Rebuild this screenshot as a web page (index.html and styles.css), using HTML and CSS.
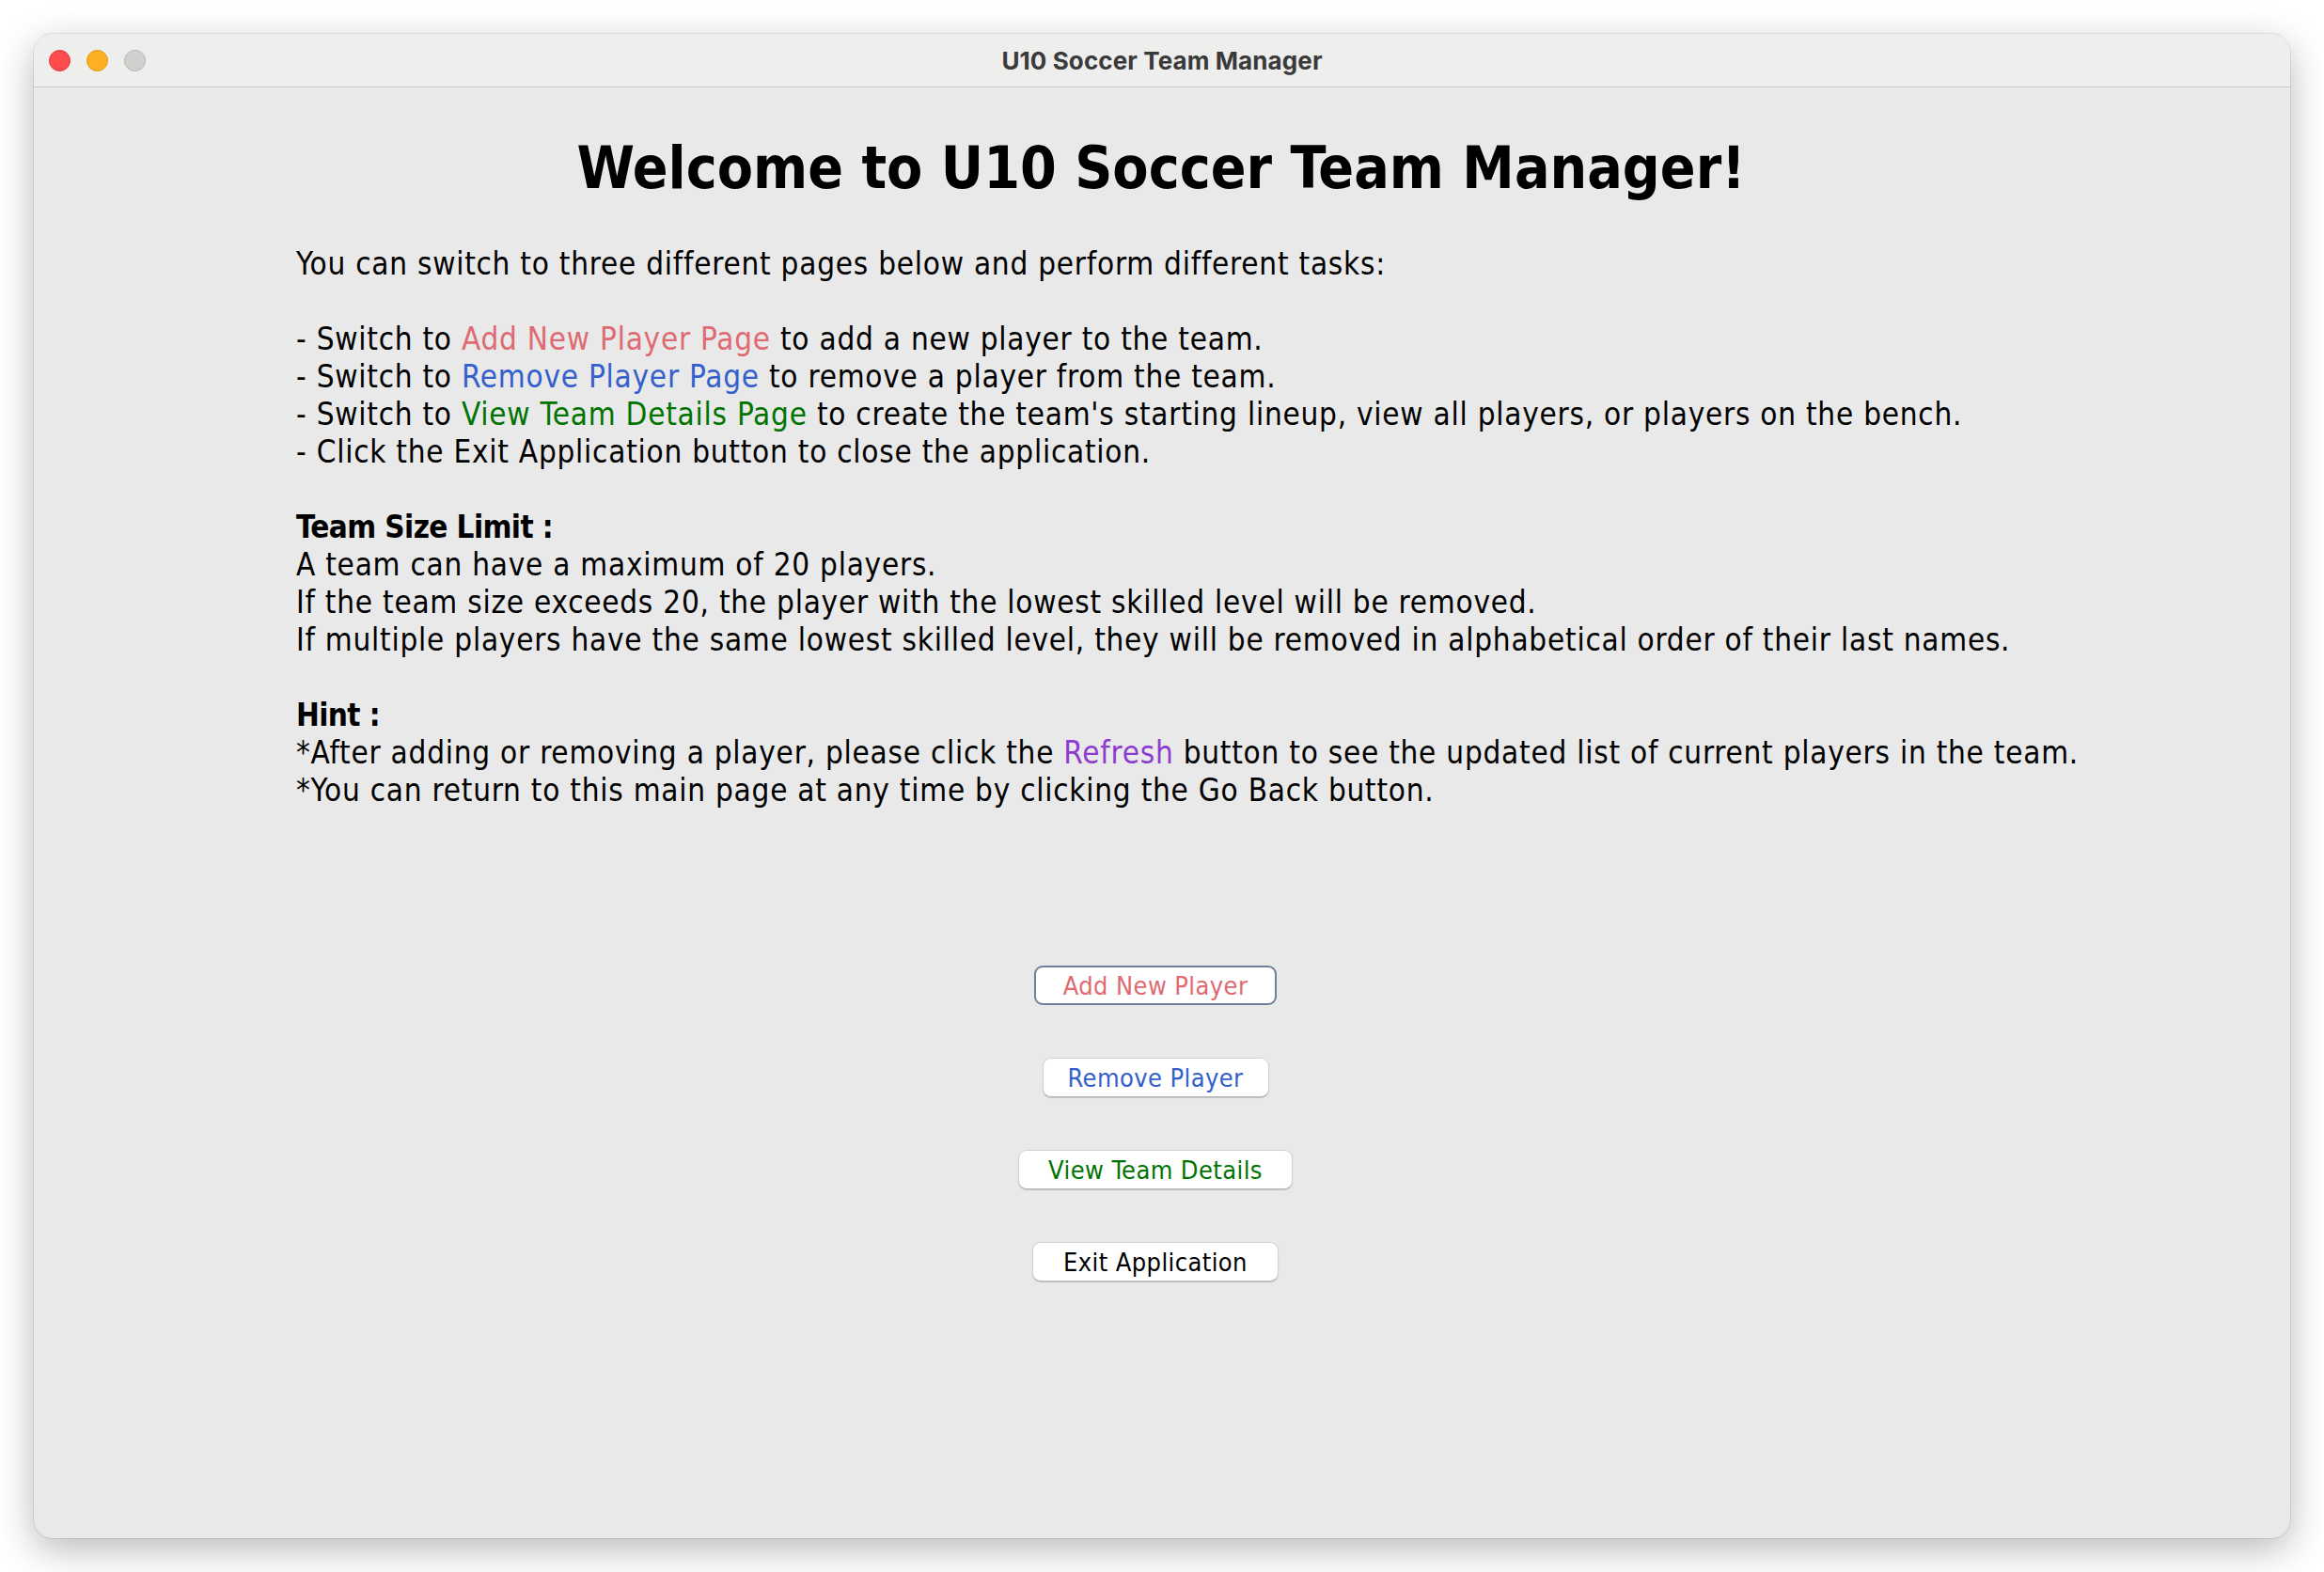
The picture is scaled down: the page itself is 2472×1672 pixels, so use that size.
FILE: index.html
```html
<!DOCTYPE html>
<html>
<head>
<meta charset="utf-8">
<title>U10 Soccer Team Manager</title>
<link rel="stylesheet" href="styles.css">
</head>
<body>
<div class="window">
  <div class="titlebar">
    <div class="lights">
      <span class="light light-close"></span>
      <span class="light light-min"></span>
      <span class="light light-max"></span>
    </div>
    <div class="title">U10 Soccer Team Manager</div>
    <div class="spacer"></div>
  </div>
  <div class="content">
    <h1 class="heading">Welcome to U10 Soccer Team Manager!</h1>
    <div class="text">
      <p class="line">You can switch to three different pages below and perform different tasks:</p>
      <p class="line blank">&nbsp;</p>
      <p class="line">- Switch to <span class="c-red">Add New Player Page</span> to add a new player to the team.</p>
      <p class="line">- Switch to <span class="c-blue">Remove Player Page</span> to remove a player from the team.</p>
      <p class="line">- Switch to <span class="c-green">View Team Details Page</span> to create the team's starting lineup, view all players, or players on the bench.</p>
      <p class="line">- Click the Exit Application button to close the application.</p>
      <p class="line blank">&nbsp;</p>
      <p class="line bold">Team Size Limit :</p>
      <p class="line">A team can have a maximum of 20 players.</p>
      <p class="line">If the team size exceeds 20, the player with the lowest skilled level will be removed.</p>
      <p class="line">If multiple players have the same lowest skilled level, they will be removed in alphabetical order of their last names.</p>
      <p class="line blank">&nbsp;</p>
      <p class="line bold">Hint :</p>
      <p class="line">*After adding or removing a player, please click the <span class="c-purple">Refresh</span> button to see the updated list of current players in the team.</p>
      <p class="line">*You can return to this main page at any time by clicking the Go Back button.</p>
    </div>
    <div class="buttons">
      <button class="btn btn-add focused">Add New Player</button>
      <button class="btn btn-remove">Remove Player</button>
      <button class="btn btn-view">View Team Details</button>
      <button class="btn btn-exit">Exit Application</button>
    </div>
  </div>
</div>
</body>
</html>
```

FILE: styles.css
```css
html, body {
  margin: 0;
  padding: 0;
  background: #ffffff;
}

body {
  width: 2472px;
  height: 1672px;
  overflow: hidden;
}

.window {
  margin: 36px 0 0 36px;
  width: 2400px;
  height: 1600px;
  border-radius: 20px;
  overflow: hidden;
  background: #e9e9e9;
  box-shadow: 0 12px 40px rgba(0, 0, 0, 0.28), 0 0 0 1px rgba(0, 0, 0, 0.08);
  display: flex;
  flex-direction: column;
}

.titlebar {
  height: 55px;
  flex: 0 0 auto;
  background: #eeeeec;
  border-bottom: 1px solid #c9c9c9;
  display: grid;
  grid-template-columns: 1fr auto 1fr;
  align-items: center;
  padding-top: 1px;
}

.lights {
  display: flex;
  gap: 17px;
  padding-left: 16px;
}

.light {
  width: 23px;
  height: 23px;
  border-radius: 50%;
  box-sizing: border-box;
}

.light-close {
  background: #fe4c4f;
  border: 1px solid #e0373b;
}

.light-min {
  background: #feb024;
  border: 1px solid #de9512;
}

.light-max {
  background: #d0d0ce;
  border: 1px solid #b3b3b1;
}

.title {
  font-family: "Inter", "Roboto", sans-serif;
  font-weight: 700;
  font-size: 26px;
  color: #3a3a3a;
  letter-spacing: 0.1px;
}

.content {
  flex: 1 1 auto;
  display: flex;
  flex-direction: column;
  font-family: "DejaVu Sans Condensed", "DejaVu Sans", sans-serif;
  font-stretch: condensed;
  color: #000;
}

.heading {
  margin: 46px 0 0 0;
  text-align: center;
  font-size: 62px;
  line-height: 80px;
  font-weight: 700;
  padding-right: 2px;
}

.text {
  margin-top: 42px;
  padding-left: 279px;
}

.line {
  margin: 0;
  font-size: 33px;
  letter-spacing: 0.75px;
  line-height: 40px;
  white-space: nowrap;
}

.bold {
  font-weight: 700;
  letter-spacing: -0.6px;
}

.c-red { color: #e06a72; }
.c-blue { color: #3360cc; }
.c-green { color: #007400; }
.c-purple { color: #8e3ccf; }

.buttons {
  margin-top: 166px;
  display: flex;
  flex-direction: column;
  align-items: center;
  gap: 56px;
  padding-right: 14px;
}

.btn {
  height: 42px;
  box-sizing: border-box;
  background: #ffffff;
  border: 1px solid #d2d2d2;
  border-bottom-color: #b8b8b8;
  border-radius: 9px;
  box-shadow: 0 1px 1px rgba(0, 0, 0, 0.18);
  font-family: "DejaVu Sans Condensed", "DejaVu Sans", sans-serif;
  font-stretch: condensed;
  font-size: 27px;
  letter-spacing: 0.4px;
  line-height: 1;
  padding: 0;
  display: flex;
  align-items: center;
  justify-content: center;
}

.focused {
  border: 2px solid #6f8098;
  box-shadow: none;
}

.btn-add { width: 258px; color: #e06a72; }
.btn-remove { width: 241px; color: #3360cc; }
.btn-view { width: 292px; color: #007400; }
.btn-exit { width: 262px; color: #000000; }
```
